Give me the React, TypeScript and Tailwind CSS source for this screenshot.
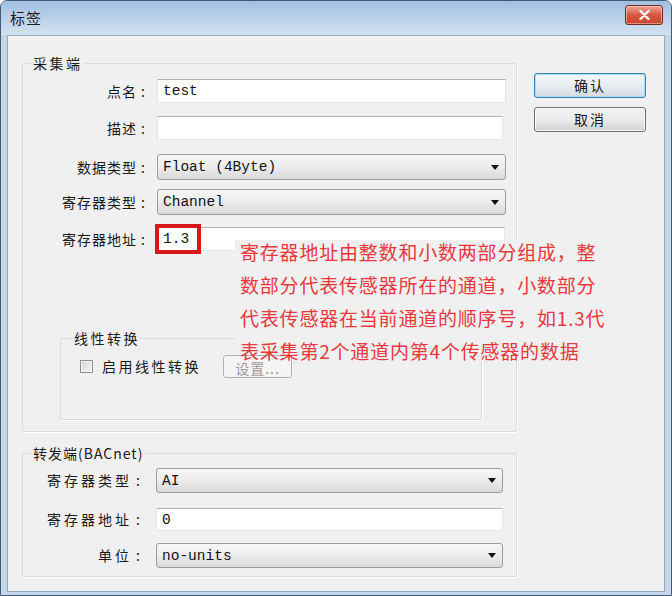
import React from "react";

const cjk = "font-['Noto_Sans_CJK_SC','Noto_Sans',sans-serif]";
const mono = "font-['Liberation_Mono',monospace]";

function Label({ text, w, spacing, gap }: { text: string; w: string; spacing: string; gap: string }) {
  return (
    <div className={`${w} ${gap} shrink-0 flex justify-end items-center text-[14px] text-[#1a1a1a]`}>
      <span className={spacing}>{text}</span>
      <span className="ml-[4px] w-[6px]">:</span>
    </div>
  );
}

function TextBox({ value, w, h }: { value: string; w: string; h: string }) {
  return (
    <div
      className={`${w} ${h} bg-white border border-[#e3e6ea] border-t-[#aeb2b8] flex items-center pl-[5px] pt-[2px] ${mono} text-[14.5px] text-[#111]`}
    >
      {value}
    </div>
  );
}

function Combo({ value, w, h }: { value: string; w: string; h: string }) {
  return (
    <div
      className={`${w} ${h} rounded-[3px] border border-[#9c9c9c] bg-gradient-to-b from-[#f7f7f7] via-[#ececec] to-[#d9d9d9] flex items-center justify-between pl-[5px] pr-[6px] ${mono} text-[14.5px] text-[#111]`}
    >
      <span className="pt-[2px]">{value}</span>
      <svg width="8" height="5" viewBox="0 0 8 5">
        <path d="M0 0 L8 0 L4 5 Z" fill="#111" />
      </svg>
    </div>
  );
}

export default function App() {
  return (
    <div className={`w-[672px] h-[596px] ${cjk} bg-white`}>
      <div className="w-[672px] h-[596px] flex flex-col border border-[#3f5b72] rounded-t-[7px] overflow-hidden bg-[#c4d7eb]">
        {/* Title bar */}
        <div className="h-[34px] shrink-0 flex items-center justify-between pl-[9px] pr-[8px] bg-gradient-to-b from-[#a2bfdf] to-[#d3e2f1]">
          <span className="text-[15px] tracking-[1px] text-[#1c1c1c]">标签</span>
          <div className="w-[38px] h-[20px] mt-[-6px] rounded-[3px] border border-[#6f2a22] bg-gradient-to-b from-[#eba797] via-[#d8563f] to-[#c8452c] flex items-center justify-center shadow-[inset_0_0_0_1px_rgba(255,220,210,0.5)]">
            <svg width="11" height="10" viewBox="0 0 11 10">
              <path d="M1.5 1 L9.5 9 M9.5 1 L1.5 9" stroke="#fff" strokeWidth="2.4" strokeLinecap="round" />
            </svg>
          </div>
        </div>
        {/* Body frame */}
        <div className="flex-1 flex px-[6px] pb-[3px]">
          <div className="flex-1 relative flex bg-[#f0f0f0] border border-[#93a8bd]">
            {/* left column */}
            <div className="pl-[14px] flex flex-col">
              <fieldset className="mt-[17px] w-[495px] h-[379px] border border-[#d9dde0] rounded-[2px] shadow-[1px_1px_0_#ffffff] flex flex-col">
                <legend className="ml-[8px] px-[2px] leading-[20px] text-[14px] tracking-[2.5px] text-[#1a1a1a]">采集端</legend>
                <div className="mt-[6px] flex items-center">
                  <Label text="点名" w="w-[124px]" spacing="tracking-[1px]" gap="mr-[10px]" />
                  <TextBox value="test" w="w-[349px]" h="h-[24px]" />
                </div>
                <div className="mt-[13px] flex items-center">
                  <Label text="描述" w="w-[124px]" spacing="tracking-[1px]" gap="mr-[10px]" />
                  <TextBox value="" w="w-[346px]" h="h-[24px]" />
                </div>
                <div className="mt-[14px] flex items-center">
                  <Label text="数据类型" w="w-[124px]" spacing="tracking-[1px]" gap="mr-[10px]" />
                  <Combo value="Float (4Byte)" w="w-[349px]" h="h-[26px]" />
                </div>
                <div className="mt-[9px] flex items-center">
                  <Label text="寄存器类型" w="w-[124px]" spacing="tracking-[1px]" gap="mr-[10px]" />
                  <Combo value="Channel" w="w-[349px]" h="h-[26px]" />
                </div>
                <div className="mt-[12px] flex items-center">
                  <Label text="寄存器地址" w="w-[124px]" spacing="tracking-[1px]" gap="mr-[10px]" />
                  <TextBox value="1.3" w="w-[348px]" h="h-[24px]" />
                </div>
                <fieldset className="mt-[77px] ml-[37px] w-[422px] h-[92px] border border-[#d9dde0] rounded-[2px] shadow-[1px_1px_0_#ffffff]">
                  <legend className="ml-[13px] leading-[20px] text-[14px] tracking-[2.5px] text-[#1a1a1a]">线性转换</legend>
                  <div className="mt-[7px] h-[23px] flex items-center">
                    <div className="ml-[19px] w-[13px] h-[13px] border border-[#8e8f8f] bg-gradient-to-br from-[#d2d2d2] to-[#f6f6f6] shadow-[inset_0_0_0_1px_#f4f4f4]" />
                    <span className="ml-[9px] text-[14px] tracking-[2.5px] text-[#1a1a1a]">启用线性转换</span>
                    <div className="ml-[22px] w-[69px] h-[23px] rounded-[3px] border border-[#adb2b5] bg-[#f4f4f4] flex items-center justify-center pt-[4px] text-[14px] leading-[15px] tracking-[1px] text-[#9d9d9d]">
                      设置...
                    </div>
                  </div>
                </fieldset>
              </fieldset>

              <fieldset className="mt-[11px] w-[495px] h-[134px] border border-[#d9dde0] rounded-[2px] shadow-[1px_1px_0_#ffffff] flex flex-col">
                <legend className="ml-[8px] px-[2px] leading-[20px] text-[14px] tracking-[1px] text-[#1a1a1a]">转发端(BACnet)</legend>
                <div className="mt-[5px] flex items-center">
                  <Label text="寄存器类型" w="w-[119px]" spacing="tracking-[3px]" gap="mr-[14px]" />
                  <Combo value="AI" w="w-[347px]" h="h-[25px]" />
                </div>
                <div className="mt-[15px] flex items-center">
                  <Label text="寄存器地址" w="w-[119px]" spacing="tracking-[3px]" gap="mr-[14px]" />
                  <TextBox value="0" w="w-[347px]" h="h-[23px]" />
                </div>
                <div className="mt-[12px] flex items-center">
                  <Label text="单位" w="w-[119px]" spacing="tracking-[3px]" gap="mr-[14px]" />
                  <Combo value="no-units" w="w-[347px]" h="h-[25px]" />
                </div>
              </fieldset>
            </div>

            {/* right column buttons */}
            <div className="ml-[17px] mt-[37px] flex flex-col gap-[9px]">
              <div className="w-[112px] h-[25px] rounded-[3px] border border-[#3c7fb1] bg-gradient-to-b from-[#f3f6f8] via-[#e8edf1] to-[#d3dbe2] shadow-[inset_0_0_0_1px_#a5ddf6] flex items-center justify-center text-[14px] tracking-[2px] text-[#1a1a1a]">
                确认
              </div>
              <div className="w-[112px] h-[25px] rounded-[3px] border border-[#707070] bg-gradient-to-b from-[#f2f2f2] via-[#ebebeb] to-[#d0d0d0] shadow-[inset_0_0_0_1px_#fafafa] flex items-center justify-center text-[14px] tracking-[2px] text-[#1a1a1a]">
                取消
              </div>
            </div>

            {/* red highlight box over the address field */}
            <div className="absolute left-[147px] top-[188px] w-[46px] h-[30px] border-[4px] border-[#d8161c]" />

            {/* annotation */}
            <div className="absolute left-[227px] top-[204px] w-[378px] h-[114px] bg-[#f0f0f0]">
              <div className="pt-[3px] pl-[5px] flex flex-col gap-[15px] text-[19px] leading-[18px] tracking-[0.8px] text-[#e8383d] whitespace-nowrap">
                <div>寄存器地址由整数和小数两部分组成，整</div>
                <div>数部分代表传感器所在的通道，小数部分</div>
                <div>代表传感器在当前通道的顺序号，如1.3代</div>
                <div>表采集第2个通道内第4个传感器的数据</div>
              </div>
            </div>
          </div>
        </div>
      </div>
    </div>
  );
}
